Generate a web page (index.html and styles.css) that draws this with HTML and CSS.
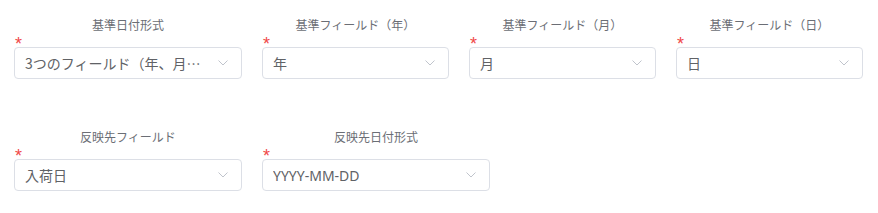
FILE: index.html
```html
<!DOCTYPE html>
<html lang="ja">
<head>
    <meta charset="UTF-8">
    <title>日付フィールド設定</title>
    <link rel="stylesheet" href="styles.css">
</head>
<body>
    <div class="form">
        <div class="row">
            <div class="field wide">
                <div class="label">基準日付形式</div>
                <div class="required">*</div>
                <div class="select">
                    <span class="value cjk">3つのフィールド（年、月、日）</span>
                    <svg class="arrow" width="10" height="6" viewBox="0 0 10 6"><path d="M0.5 0.5 L5 5 L9.5 0.5" fill="none" stroke="#c0c4cc" stroke-width="1"/></svg>
                </div>
            </div>
            <div class="field">
                <div class="label">基準フィールド（年）</div>
                <div class="required">*</div>
                <div class="select">
                    <span class="value">年</span>
                    <svg class="arrow" width="10" height="6" viewBox="0 0 10 6"><path d="M0.5 0.5 L5 5 L9.5 0.5" fill="none" stroke="#c0c4cc" stroke-width="1"/></svg>
                </div>
            </div>
            <div class="field">
                <div class="label">基準フィールド（月）</div>
                <div class="required">*</div>
                <div class="select">
                    <span class="value">月</span>
                    <svg class="arrow" width="10" height="6" viewBox="0 0 10 6"><path d="M0.5 0.5 L5 5 L9.5 0.5" fill="none" stroke="#c0c4cc" stroke-width="1"/></svg>
                </div>
            </div>
            <div class="field">
                <div class="label">基準フィールド（日）</div>
                <div class="required">*</div>
                <div class="select">
                    <span class="value">日</span>
                    <svg class="arrow" width="10" height="6" viewBox="0 0 10 6"><path d="M0.5 0.5 L5 5 L9.5 0.5" fill="none" stroke="#c0c4cc" stroke-width="1"/></svg>
                </div>
            </div>
        </div>
        <div class="row">
            <div class="field wide">
                <div class="label">反映先フィールド</div>
                <div class="required">*</div>
                <div class="select">
                    <span class="value">入荷日</span>
                    <svg class="arrow" width="10" height="6" viewBox="0 0 10 6"><path d="M0.5 0.5 L5 5 L9.5 0.5" fill="none" stroke="#c0c4cc" stroke-width="1"/></svg>
                </div>
            </div>
            <div class="field wide">
                <div class="label">反映先日付形式</div>
                <div class="required">*</div>
                <div class="select">
                    <span class="value">YYYY-MM-DD</span>
                    <svg class="arrow" width="10" height="6" viewBox="0 0 10 6"><path d="M0.5 0.5 L5 5 L9.5 0.5" fill="none" stroke="#c0c4cc" stroke-width="1"/></svg>
                </div>
            </div>
        </div>
    </div>
</body>
</html>
```

FILE: styles.css
```css
body {
    margin: 0;
    background-color: #fff;
    font-family: 'Noto Sans', 'Noto Sans CJK JP', sans-serif;
}

.form {
    display: flex;
    flex-direction: column;
    gap: 51px;
    padding: 18px 14px;
}

.row {
    display: flex;
    gap: 20px;
}

.field {
    display: flex;
    flex-direction: column;
    width: 187px;
}

.field.wide {
    width: 228px;
}

.label {
    text-align: center;
    font-size: 12px;
    line-height: 16px;
    color: #6b6e75;
}

.required {
    height: 13px;
    font-family: 'Liberation Sans', sans-serif;
    font-size: 18px;
    line-height: 20px;
    color: #f04848;
    padding-left: 1px;
}

.select {
    height: 32px;
    box-sizing: border-box;
    border: 1px solid #dcdfe6;
    border-radius: 4px;
    display: flex;
    align-items: center;
    gap: 8px;
    padding: 0 13px 0 10px;
}

.value {
    flex: 1;
    min-width: 0;
    font-size: 14px;
    color: #606266;
    white-space: nowrap;
    overflow: hidden;
    text-overflow: ellipsis;
}

/* 全角の省略記号を中央に出すため */
.value.cjk {
    font-family: 'Noto Sans CJK JP', sans-serif;
}

.arrow {
    flex-shrink: 0;
}
```
